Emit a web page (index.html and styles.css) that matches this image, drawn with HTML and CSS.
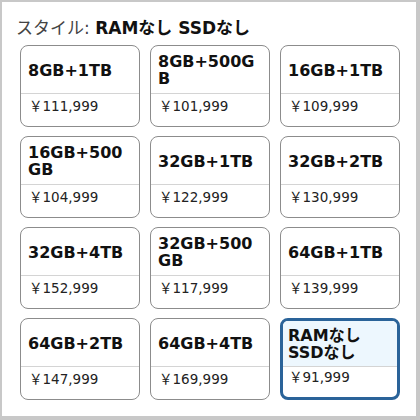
FILE: index.html
```html
<!DOCTYPE html>
<html lang="ja">
<head>
    <meta charset="UTF-8">
    <meta name="viewport" content="width=device-width, initial-scale=1.0">
    <title>スタイル</title>
    <link rel="stylesheet" href="styles.css">
</head>
<body>
    <div class="cornice">
        <p class="titolo">スタイル: <b>RAMなし SSDなし</b></p>

        <div class="griglia">
            <div class="opzione">
                <div class="nome">8GB+1TB</div>
                <div class="prezzo">￥111,999</div>
            </div>
            <div class="opzione">
                <div class="nome">8GB+500GB</div>
                <div class="prezzo">￥101,999</div>
            </div>
            <div class="opzione">
                <div class="nome">16GB+1TB</div>
                <div class="prezzo">￥109,999</div>
            </div>

            <div class="opzione">
                <div class="nome">16GB+500GB</div>
                <div class="prezzo">￥104,999</div>
            </div>
            <div class="opzione">
                <div class="nome">32GB+1TB</div>
                <div class="prezzo">￥122,999</div>
            </div>
            <div class="opzione">
                <div class="nome">32GB+2TB</div>
                <div class="prezzo">￥130,999</div>
            </div>

            <div class="opzione">
                <div class="nome">32GB+4TB</div>
                <div class="prezzo">￥152,999</div>
            </div>
            <div class="opzione">
                <div class="nome">32GB+500GB</div>
                <div class="prezzo">￥117,999</div>
            </div>
            <div class="opzione">
                <div class="nome">64GB+1TB</div>
                <div class="prezzo">￥139,999</div>
            </div>

            <div class="opzione">
                <div class="nome">64GB+2TB</div>
                <div class="prezzo">￥147,999</div>
            </div>
            <div class="opzione">
                <div class="nome">64GB+4TB</div>
                <div class="prezzo">￥169,999</div>
            </div>
            <div class="opzione selezionata">
                <div class="nome">RAMなし SSDなし</div>
                <div class="prezzo">￥91,999</div>
            </div>
        </div>
    </div>
</body>
</html>
```

FILE: styles.css
```css
* {
    box-sizing: border-box;
}

body {
    margin: 0;
    font-family: "DejaVu Sans", "Noto Sans CJK JP", sans-serif;
    color: #111;
    background-color: #c8c8c8;
}

.cornice {
    width: 420px;
    height: 420px;
    background-color: #fff;
    border-style: solid;
    border-color: #c8c8c8;
    border-width: 2px 4px 4px 2px;   /*il bordo grigio intorno alla pagina*/
    padding: 14px 0 0 14px;
}

.titolo {
    margin: 0;
    font-size: 17px;
    line-height: 24px;
    color: #444;
}

.titolo b {
    color: #111;
}

.griglia {
    display: grid;
    grid-template-columns: repeat(3, 120px);
    grid-auto-rows: 82px;
    column-gap: 10px;
    row-gap: 9px;
    margin: 5px 0 0 4px;
}

.opzione {
    display: flex;
    flex-direction: column;
    border: 1px solid #8c8c8c;
    border-radius: 8px;
    overflow: hidden;
}

.nome {
    display: flex;
    align-items: center;
    height: 48px;
    padding: 1px 7px 0 7px;
    border-bottom: 1px solid #d4d4d4;
    font-size: 16px;
    font-weight: bold;
    line-height: 17px;
    overflow-wrap: anywhere;   /*spezza "8GB+500GB" quando non entra nella riga*/
}

.prezzo {
    padding: 3px 8px 0 8px;
    font-size: 13.5px;
    line-height: 18px;
    color: #222;
}

.selezionata {
    border: 3px solid #2a6399;
}

.selezionata .nome {
    height: 46px;
    padding: 1px 5px 0 5px;
    background-color: #edf7fe;
}

.selezionata .prezzo {
    padding: 1px 6px 0 6px;
}
```
